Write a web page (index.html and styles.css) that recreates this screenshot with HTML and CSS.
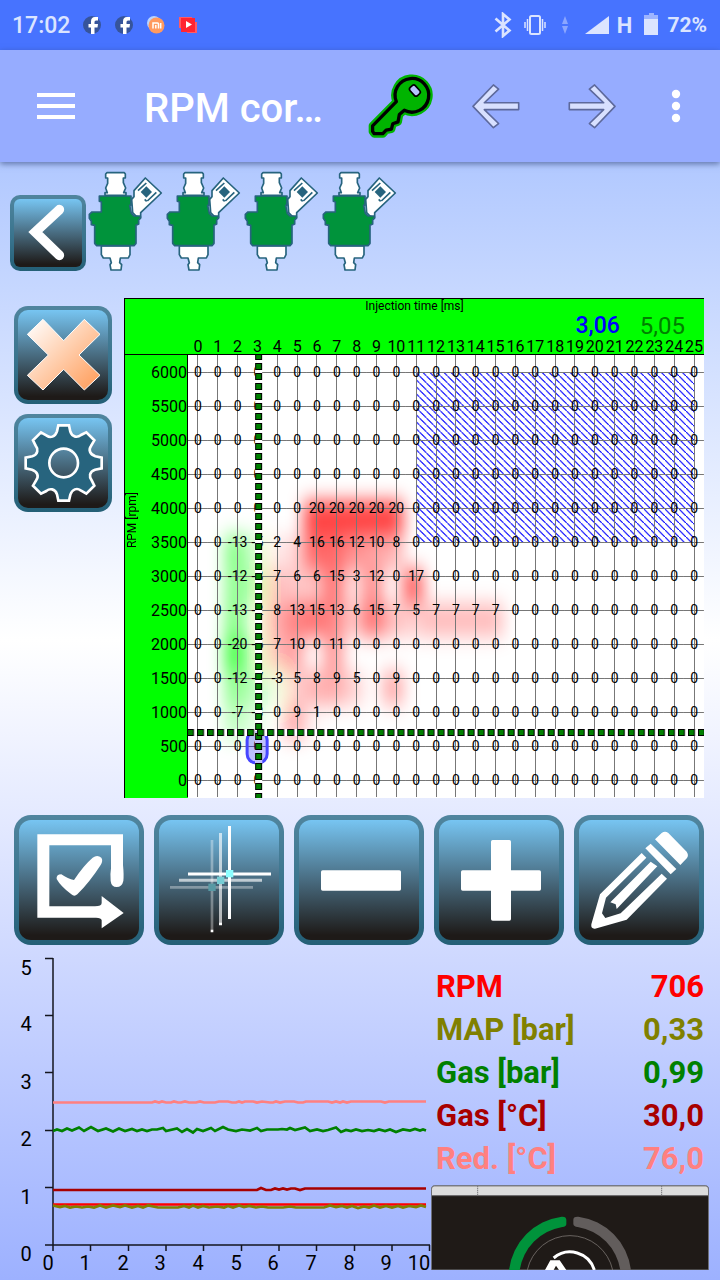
FILE: index.html
```html
<!DOCTYPE html>
<html lang="en">
<head>
<meta charset="utf-8">
<meta name="viewport" content="width=device-width, initial-scale=1">
<title>RPM correction</title>
<link rel="stylesheet" href="styles.css">
</head>
<body>
<div class="status">
  <span class="status__time">17:02</span>
  <svg class="status__app" viewBox="0 0 20 20"><circle cx="10" cy="10" r="9" fill="#36549b"/><path d="M9 19v-6.500H6.500V9H9V6.500Q9 2 13 2h3v3.500H14q-1.500 0-1.500 1.500v2h3.500l-.5 3.500h-3V19z" fill="#fff"/></svg>
  <svg class="status__app" viewBox="0 0 20 20"><circle cx="10" cy="10" r="9" fill="#36549b"/><path d="M9 19v-6.500H6.500V9H9V6.500Q9 2 13 2h3v3.500H14q-1.500 0-1.500 1.500v2h3.500l-.5 3.500h-3V19z" fill="#fff"/></svg>
  <svg class="status__app" viewBox="0 0 20 20"><circle cx="8" cy="8" r="7" fill="#b9d4ff"/><circle cx="10.500" cy="10.500" r="8" fill="#ff9a5f"/><path d="M7 13.500V8h4.500q1 0 1 1v4.500M9.800 10v3.500M14.700 8v5.500" fill="none" stroke="#fff" stroke-width="1.500"/></svg>
  <svg class="status__app" viewBox="0 0 20 20"><path d="M1 2h13v11H1z" fill="#ff5a64"/><path d="M9 7h10v11H9z" fill="#ff5a64"/><path d="M3 3h14v14H3z" fill="#ff2432"/><path d="M8 6v7l6-3.500z" fill="#fff"/></svg>
  <span class="status__space"></span>
  <svg class="status__bt" viewBox="0 0 18 26"><path d="M1.500 6.500l14 12L9 24V2l6.500 5.500-14 12" fill="none" stroke="#dbe4ff" stroke-width="2.600"/></svg>
  <svg class="status__vib" viewBox="0 0 22 20"><rect x="6" y="1" width="10" height="18" rx="1.500" fill="none" stroke="#dbe4ff" stroke-width="2"/><path d="M3.500 4v12M18.500 4v12M1 7v6M21 7v6" stroke="#dbe4ff" stroke-width="1.500"/></svg>
  <svg class="status__data" viewBox="0 0 6 18"><path d="M3 0l3 8H0zM3 18l3-8H0z" fill="#8ba6ff"/></svg>
  <svg class="status__signal" viewBox="0 0 24 18"><path d="M24 0v18H0z" fill="#dbe4ff"/></svg>
  <span class="status__net">H</span>
  <svg class="status__bat" viewBox="0 0 14 22"><path d="M5 0h5v2h4v4H0V2h5z" fill="#9db4ff"/><path d="M0 6h14v16H0z" fill="#dbe4ff"/></svg>
  <span class="status__level">72%</span>
</div>

<header class="bar">
  <button class="bar__menu" aria-label="Menu"><svg viewBox="0 0 38 26"><path d="M0 2h38M0 13h38M0 24h38" stroke="#fff" stroke-width="4"/></svg></button>
  <h1 class="bar__title">RPM cor…</h1>
  <button class="bar__key" aria-label="Key"><svg viewBox="20 218 200 200"><g stroke-linejoin="round"><path d="M109 305A51 51 0 1 1 133 331L118 344L114 366L98 372L94 388L78 391L68 402H42L37 395V378Z" fill="#00b400" stroke="#00b400" stroke-width="24"/><path d="M109 305A51 51 0 1 1 133 331L118 344L114 366L98 372L94 388L78 391L68 402H42L37 395V378Z" fill="#00b400" stroke="#000" stroke-width="10"/></g><rect x="-9" y="-17" width="22" height="33" rx="7" transform="translate(164 273) rotate(-42)" fill="#b5c5ff" stroke="#000" stroke-width="5"/></svg></button>
  <button class="bar__arrow" aria-label="Previous"><svg viewBox="336 246 148 144"><path d="M339 318L402 252L418 265L374 307H480V328H374L418 371L402 384Z" fill="#d8e0ff" stroke="#5d699c" stroke-width="5" stroke-linejoin="round"/></svg></button>
  <button class="bar__arrow" aria-label="Next"><svg viewBox="336 246 148 144"><path d="M481 318L418 252L402 265L446 307H340V328H446L402 371L418 384Z" fill="#d8e0ff" stroke="#5d699c" stroke-width="5" stroke-linejoin="round"/></svg></button>
  <button class="bar__more" aria-label="More"><svg viewBox="0 0 20 36"><circle cx="10" cy="6" r="4.200"/><circle cx="10" cy="18" r="4.200"/><circle cx="10" cy="30" r="4.200"/></svg></button>
</header>

<main>
  <svg class="defs" aria-hidden="true">
    <defs>
      <linearGradient id="peach" x1="0" y1="0" x2="1" y2="1"><stop offset=".1" stop-color="#fff6f0"/><stop offset=".9" stop-color="#ffa466"/></linearGradient>
      <g id="injector" stroke="#27647e" stroke-width="5" stroke-linejoin="round">
        <path d="M434 54L482 99L420 158V174L406 168L396 158L393 118L400 110V92Z" fill="#fff"/>
        <path d="M437 79L454 96L437 113L420 96Z" fill="#27647e" stroke="none"/>
        <path d="M412 92L437 69M440 123L467 97M432 118L438 124" fill="none"/>
        <path d="M319 38H371L374 42V54H368V68L375 84L369 98H376V106H313V98H320L315 84L321 70V54H315V42Z" fill="#fff"/>
        <path d="M302 258V284L308 294H328L332 308L328 314L331 330H361L363 314L357 308L359 294H383L388 284V258Z" fill="#fff"/>
        <path d="M296 108H391V136H387L392 160L400 168H419V175L414 180V192L406 196V250L400 257H288L282 250V196L272 194V184L266 175V163L274 156H302V126L296 124Z" fill="#00933b"/>
      </g>
    </defs>
  </svg>

  <section class="injectors">
    <button class="key key--back" aria-label="Back"><svg viewBox="42 114 204 204"><path d="M178 146L106 213L178 283" fill="none" stroke="#fff" stroke-width="29" stroke-linecap="round"/></svg></button>
    <svg class="injectors__one" viewBox="262 33 228 300"><use href="#injector"/></svg>
    <svg class="injectors__one" viewBox="262 33 228 300"><use href="#injector"/></svg>
    <svg class="injectors__one" viewBox="262 33 228 300"><use href="#injector"/></svg>
    <svg class="injectors__one" viewBox="262 33 228 300"><use href="#injector"/></svg>
  </section>

  <section class="editor">
    <div class="editor__side">
      <button class="key key--mid" aria-label="Clear"><svg viewBox="54 60 270 270"><path d="M129 88L191 152L253 88L300 133L237 195L300 256L253 300L191 238L129 300L82 256L145 195L82 133Z" fill="url(#peach)" stroke="#fff" stroke-width="3"/></svg></button>
      <button class="key key--mid" aria-label="Settings"><svg viewBox="-137 -135 270 270"><path fill-rule="evenodd" d="M-16-113L16-113L20-94C26-76 42-76 52-84L68-92L92-68L82-51C74-40 78-26 95-20L114-16V16L94 20C76 26 76 42 84 52L92 68L68 92L51 82C40 74 26 78 20 95L16 113H-16L-20 94C-26 76-42 76-52 84L-68 92L-92 68L-82 51C-74 40-78 26-95 20L-114 16V-16L-94-20C-76-26-76-42-84-52L-92-68L-68-92L-51-82C-40-74-26-78-20-95ZM-43 0A43 43 0 0 0 43 0A43 43 0 0 0-43 0Z" fill="#27647e" stroke="#fff" stroke-width="8"/></svg></button>
    </div>
    <div class="map">
      <p class="map__caption">Injection time [ms]</p>
      <p class="map__readings"><span class="map__petrol">3,06</span><span class="map__gas">5,05</span></p>
      <div class="map__body">
        <p class="map__axis"><span>RPM [rpm]</span></p>
        <div class="map__grid">
          <svg class="map__layer" viewBox="0 0 515 443" preserveAspectRatio="none">
            <defs>
              <filter id="soft" x="-20%" y="-20%" width="140%" height="140%"><feGaussianBlur stdDeviation="8 10"/></filter>
              <pattern id="hatch" width="7" height="7" patternUnits="userSpaceOnUse"><path d="M-1-1L8 8" stroke="#0000ff" stroke-width="1.100"/></pattern>
            </defs>
            <rect width="515" height="443" fill="#fff"/>
            <g id="cells" filter="url(#soft)" shape-rendering="crispEdges"></g>
            <rect x="228" y="17" width="278" height="170" fill="url(#hatch)"/>
          </svg>
          <table class="map__table" id="table"><thead><tr><td></td></tr></thead><tbody></tbody></table>
          <svg class="map__layer map__layer--over" viewBox="0 0 515 443" preserveAspectRatio="none">
            <defs>
              <pattern id="dotsV" x="67" y="-2" width="7" height="10" patternUnits="userSpaceOnUse"><rect width="7" height="7" fill="#000"/><rect x="1" y="1" width="5" height="5" fill="#008000"/></pattern>
              <pattern id="dotsH" x="9" y="374" width="10" height="7" patternUnits="userSpaceOnUse"><rect width="7" height="7" fill="#000"/><rect x="1" y="1" width="5" height="5" fill="#008000"/></pattern>
            </defs>
            <rect x="59" y="376" width="20" height="32" rx="9" fill="#0000ff" fill-opacity=".25" stroke="#4646ff" stroke-width="3"/>
            <path d="M67 0h7v443h-7z" fill="#fff"/><path d="M0 374h515v7H0z" fill="#fff"/>
            <path d="M67 376h7v32h-7z" fill="#c0c0ff"/>
            <rect x="67" y="0" width="7" height="443" fill="url(#dotsV)"/>
            <rect x="0" y="374" width="515" height="7" fill="url(#dotsH)"/>
          </svg>
        </div>
      </div>
    </div>
  </section>

  <section class="tools">
    <button class="key key--big" aria-label="Apply"><svg viewBox="57 45 360 360"><path d="M112 88H369V180Q372 210 370 228Q366 246 350 246Q334 246 332 228Q330 208 333 190V121H148V304H285Q305 304 305 294V273L371 324L305 370V346Q304 338 288 338H112Z" fill="#fff"/><path d="M170 222Q168 208 184 208Q204 222 222 225Q250 182 278 158Q292 148 304 158Q310 166 302 180Q270 230 232 268Q223 276 214 268Q182 244 170 222Z" fill="#fff"/></svg></button>
    <button class="key key--big" aria-label="Trace"><svg viewBox="477 45 360 360"><path d="M636 105V375M510 247H759" stroke="#fff" stroke-opacity=".35" stroke-width="8"/><path d="M632 374h8v8h-8zM657 353h9v8h-9z" fill="#fff"/><path d="M661.500 84V354M537 226H786" stroke="#fff" stroke-opacity=".65" stroke-width="9"/><path d="M688.500 63V342M564 207H813" stroke="#fff" stroke-width="9"/><path d="M625 236h22v22h-22z" fill="#5899a4"/><path d="M651 215h22v22h-22z" fill="#76cdd4"/><path d="M678 195h22v22h-22z" fill="#8cffff"/></svg></button>
    <button class="key key--big" aria-label="Decrease"><svg viewBox="27 45 360 360"><rect x="93" y="196" width="240" height="61" rx="5" fill="#fff"/></svg></button>
    <button class="key key--big" aria-label="Increase"><svg viewBox="447 45 360 360"><path d="M603 110q0-5 5-5h50q5 0 5 5v86h85q5 0 5 5v51q0 5-5 5h-85v85q0 5-5 5h-50q-5 0-5-5v-85h-85q-5 0-5-5v-51q0-5 5-5h85z" fill="#fff"/></svg></button>
    <button class="key key--big" aria-label="Edit"><svg viewBox="867 45 360 360"><path fill-rule="evenodd" d="M1095 103L1115 84Q1125 77 1135 84L1190 140Q1197 150 1191 159L1171 180ZM1066 130L1082 116L1159 192L1142 208ZM1055 144L1069 158L948 278L936 325L946 339L992 325L1115 206L1131 221L1010 344L915 371Q902 372 904 358L930 268ZM1082 170L1102 184L980 312L977 298L961 292Z" fill="#fff"/></svg></button>
  </section>

  <section class="live">
    <svg class="trend" viewBox="0 0 430 322" role="img" aria-label="Sensor history">
      <path d="M45 .5H53M45 57.500H53M45 114.500H53M45 172.500H53M45 229.500H53M45 287H430M53 0V293M90.500 287v6M128.500 287v6M166 287v6M203.500 287v6M241.500 287v6M279 287v6M316.500 287v6M354.500 287v6M392 287v6M429.500 287v6" fill="none" stroke="#14161f" stroke-width="1.500"/>
      <g><text x="26" y="17">5</text><text x="26" y="73">4</text><text x="26" y="131">3</text><text x="26" y="188">2</text><text x="26" y="246">1</text><text x="26" y="303">0</text></g>
      <g><text x="48" y="312">0</text><text x="85" y="312">1</text><text x="123" y="312">2</text><text x="160" y="312">3</text><text x="198" y="312">4</text><text x="236" y="312">5</text><text x="273" y="312">6</text><text x="311" y="312">7</text><text x="349" y="312">8</text><text x="386" y="312">9</text><text x="419" y="312">10</text></g>
      <g fill="none" stroke-width="2.700">
        <path d="M53 144.500H152L155 143.500L159 144.500L162 143.500L166 144.500H171L174 143.500L178 144.500H181L185 143.500L189 144.500H196L200 143.500L204 144.500H215L219 143.500H228L232 144.500H236L239 143.500L242 144.500L245 143.500H253L257 144.500L262 143.500L270 144.500H273L276 143.500L280 144.500L285 143.500H294L298 144.500H303L306 143.500H328L332 144.500L336 143.500L340 144.500L343 143.500L347 144.500L351 143.500H381L385 144.500L389 143.500H426" stroke="#ff8080"/>
        <path d="M53 173L57 171.500L62 173L67 170.500L72 172.500L79 169.500L84 173L91 169L98 173L106 170.500L113 173.500L119 170.500L125 173L132 171L137 173L142 171.500L147 173L152 171.500H157L163 170L166 173L177 170.500L182 174L187 171L193 174.500L197 171L203 173L211 170L215 173L223 169L228 171.500L236 173L242 171.500L250 172.500L257 170L261 173L267 171.500H278L282 171L287 171.500L290 170L295 172L305 169.500L310 173L317 171.500L323 173L328 172L336 169.500L341 174L346 172L351 173L356 171.500L362 173L368 172L374 173L379 171.500L385 173L390 171.500L396 174L403 171.500L410 172.500L415 171L420 172.500L423 171.500L426 172.500" stroke="#008000"/>
        <path d="M53 232H257L261 230L266 232H271L275 230.500L279 231.500L283 230.500L287 231.500L291 230.500H295L300 232L305 230.500H426" stroke="#a80000"/>
        <path d="M53 246.500H426" stroke="#ff0000"/>
        <path d="M53 247.500L60 249L65 248L70 249.500L76 248.500L82 249.500L88 248.500L94 249.500L100 247.500L106 249.500L113 247.500L120 249L125 247.500L132 249.500L138 248L143 249.500L148 247.500L158 249.500H178L184 248L189 249.500L193 247.500L198 249.500L203 248L209 249.500L217 248.500L224 249.500L228 248L233 249.500L239 247.500L244 249L249 248L256 249.500L262 248.500L268 249.500H283L290 248.500L296 249.500H324L330 247.500L336 249L342 248L347 249.500L352 248L358 250L364 248.500L369 249.500L374 247.500L380 249.500L386 248L392 249.500L398 248L403 249.500L409 248L416 249L421 247.500L426 249" stroke="#808000"/>
      </g>
    </svg>
    <div class="live__side">
      <dl class="values">
        <div class="values__row values__row--rpm"><dt>RPM</dt><dd>706</dd></div>
        <div class="values__row values__row--map"><dt>MAP [bar]</dt><dd>0,33</dd></div>
        <div class="values__row values__row--press"><dt>Gas [bar]</dt><dd>0,99</dd></div>
        <div class="values__row values__row--gas"><dt>Gas [°C]</dt><dd>30,0</dd></div>
        <div class="values__row values__row--red"><dt>Red. [°C]</dt><dd>76,0</dd></div>
      </dl>
      <svg class="switch" viewBox="18 675 834 255" role="img" aria-label="Fuel switch">
        <path d="M19 690Q19 677 28 677H842Q851 677 851 690V930H19Z" fill="#1f1a17" stroke="#74767c" stroke-width="3"/>
        <path d="M21 706V688Q21 679 28 679H842Q849 679 849 688V706Z" fill="#dcdcdc"/>
        <path d="M158 678V706M710 678V706" stroke="#77777b" stroke-width="3" stroke-dasharray="4 2"/>
        <path d="M20 707H850" stroke="#8a8a8c" stroke-width="2"/>
        <path d="M252 930A184 184 0 0 1 410 770Q424 769 424 780V792Q424 800 412 801A154 154 0 0 0 284 930Z" fill="#00933b"/>
        <path d="M618 930A184 184 0 0 0 460 770Q444 769 445 780V792Q446 800 458 801A154 154 0 0 1 586 930Z" fill="#625d5c"/>
        <path d="M307 930A131 131 0 0 1 563 930" fill="none" stroke="#77716e" stroke-width="2.500"/>
        <path d="M386 894A76 76 0 0 1 508 930" fill="none" stroke="#fff" stroke-width="9"/>
        <path d="M360 930L376 901H404L424 930H402L393 917L386 930Z" fill="#fff"/>
      </svg>
    </div>
  </section>
</main>
<script src="map.js"></script>
</body>
</html>
```

FILE: styles.css
```css
* { box-sizing: border-box; }
html { min-height: 100%; }
body {
  margin: 0;
  min-height: 100vh;
  font-family: Roboto, "Noto Sans", sans-serif;
  color: #000;
  background: linear-gradient(#97b6ff, #fff 50%, #9db1ff);
}
p, h1, dl, dd { margin: 0; }
button { padding: 0; border: 0; background: none; font: inherit; cursor: pointer; }
svg { display: block; }
.defs { position: absolute; width: 0; height: 0; }

.status {
  display: flex;
  align-items: center;
  height: 50px;
  padding: 0 13px 0 12px;
  background: #4773ff;
  color: #dbe4ff;
  font-size: 23px;
  font-weight: 700;
}
.status__time { margin-right: 12px; font-weight: 500; }
.status__app { width: 20px; height: 20px; margin-right: 12px; }
.status__space { flex: 1; }
.status__bt { width: 18px; height: 26px; margin-right: 12px; }
.status__vib { width: 22px; height: 20px; margin-right: 16px; }
.status__data { width: 6px; height: 18px; margin-right: 17px; }
.status__signal { width: 24px; height: 18px; margin-right: 8px; }
.status__net { margin-right: 12px; font-size: 22px; }
.status__bat { width: 14px; height: 22px; margin: 0 9px 2px 0; }
.status__level { font-size: 21px; }

.bar {
  display: flex;
  align-items: center;
  height: 112px;
  padding: 0 34px 0 37px;
  background: #96acff;
  box-shadow: 0 2px 6px rgba(40, 60, 110, .6);
}
.bar__menu { width: 38px; margin: 0 69px 0 0; }
.bar__title { flex: 1; min-width: 0; padding-top: 4px; color: #fff; font-size: 40px; font-weight: 500; white-space: nowrap; }
.bar__key { width: 66px; margin-right: 39px; }
.bar__arrow { width: 48px; margin-right: 48px; }
.bar__arrow + .bar__arrow { margin-right: 50px; }
.bar__more { width: 20px; fill: #fff; }

.key {
  flex: none;
  border: 4px solid transparent;
  border-radius: 14px;
  background:
    linear-gradient(#77c5f2, #1e1a18 96%) padding-box,
    linear-gradient(#50859e, #37728c 60%, #245f76) border-box;
}
.key svg { width: 100%; height: 100%; }
.key--back { width: 76px; height: 76px; border-radius: 10px; margin-right: 2px; }
.key--mid { width: 98px; height: 98px; }
.key--big { flex: 1; aspect-ratio: 1; border-width: 5px; border-radius: 17px; }

.injectors { display: flex; align-items: flex-end; gap: 2px; padding: 9px 10px 0; }
.injectors__one { width: 76px; height: 100px; margin-left: -2px; margin-right: 2px; }

.editor { display: flex; gap: 12px; padding: 27px 16px 0 14px; }
.editor__side { display: flex; flex-direction: column; gap: 10px; padding-top: 8px; }

.map { flex: 1; min-width: 0; background: #0f0; border: 1px solid #000; border-width: 1px 0 0 1px; }
.map__caption { height: 14px; line-height: 14px; font-size: 12px; text-align: center; }
.map__readings { display: flex; justify-content: flex-end; gap: 20px; height: 25px; padding-right: 19px; line-height: 26px; font-size: 24px; }
.map__petrol { color: #00f; font-size: 23px; font-weight: 500; }
.map__gas { color: #008000; }
.map__body { display: flex; }
.map__axis { display: flex; align-items: center; justify-content: center; width: 15px; margin-top: 16px; padding-bottom: 112px; border-top: 1px solid #000; line-height: 15px; font-size: 12px; }
.map__axis span { writing-mode: vertical-rl; transform: rotate(180deg); }
.map__grid { position: relative; flex: 1; min-width: 0; }
.map__layer { position: absolute; left: 48px; top: 17px; width: calc(100% - 48px); height: calc(100% - 17px); }
.map__layer--over { pointer-events: none; }
.map__table, .map__table thead, .map__table tbody { display: block; position: relative; }
.map__table tr { display: grid; grid-template-columns: 48px repeat(26, 1fr); }
.map__table th, .map__table td { display: flex; align-items: center; justify-content: center; min-width: 0; padding: 0; font-size: 16px; font-weight: 400; white-space: nowrap; }
.map__table thead tr { height: 17px; border-bottom: 1px solid #000; line-height: 18px; }
.map__table tbody { padding-bottom: 1px; }
.map__table tbody tr { height: 34px; }
.map__table tbody th { justify-content: flex-end; background: #0f0; border-right: 1px solid #000; }
.map__table tbody td {
  font-size: 14px;
  background:
    linear-gradient(#777, #777) center / 1px 100% no-repeat,
    linear-gradient(#777, #777) center / 100% 1px no-repeat;
}

.tools { display: flex; gap: 10px; padding: 17px 16px 0 14px; }

.live { display: grid; grid-template-columns: minmax(0, 43fr) minmax(0, 29fr); padding-top: 13px; }
.trend { width: 100%; overflow: visible; font-size: 20px; text-anchor: middle; }
.live__side { padding: 7px 11px 0 1px; }
.values { padding: 0 5px; font-size: 31px; font-weight: 700; }
.values__row { display: flex; justify-content: space-between; line-height: 43px; }
.values__row--rpm { color: #f00; }
.values__row--map { color: #808000; }
.values__row--press { color: #008000; }
.values__row--gas { color: #a80000; }
.values__row--red { color: #ff8080; }
.switch { width: 100%; margin-top: 5px; }
```

FILE: map.js
```js
const COLUMNS = 26;
const ROWS = [
  [6000], [5500], [5000], [4500],
  [4000, 0, 0, 0, 0, 0, 0, 20, 20, 20, 20, 20],
  [3500, 0, 0, -13, -5, 2, 4, 16, 16, 12, 10, 8],
  [3000, 0, 0, -12, -8, 7, 6, 6, 15, 3, 12, 0, 17],
  [2500, 0, 0, -13, -2, 8, 13, 15, 13, 6, 15, 7, 5, 7, 7, 7, 7],
  [2000, 0, 0, -20, -5, 7, 10, 0, 11],
  [1500, 0, 0, -12, -7, -3, 5, 8, 9, 5, 0, 9],
  [1000, 0, 0, -7, -3, 0, 9, 1],
  [500], [0]
];

const head = document.querySelector("#table thead tr");
for (let c = 0; c < COLUMNS; c++) {
  const th = document.createElement("th");
  th.scope = "col";
  th.textContent = c;
  head.append(th);
}

const body = document.querySelector("#table tbody");
const cells = document.getElementById("cells");
const cw = 515 / COLUMNS;
const ch = 34;

ROWS.forEach(([rpm, ...values], r) => {
  const tr = document.createElement("tr");
  const th = document.createElement("th");
  th.scope = "row";
  th.textContent = rpm;
  tr.append(th);
  for (let c = 0; c < COLUMNS; c++) {
    const value = values[c] || 0;
    const td = document.createElement("td");
    td.textContent = value;
    tr.append(td);
    if (value) {
      const rect = document.createElementNS("http://www.w3.org/2000/svg", "rect");
      rect.setAttribute("x", Math.round(c * cw) - 3);
      rect.setAttribute("y", r * ch + 10);
      rect.setAttribute("width", Math.round((c + 1) * cw) - Math.round(c * cw));
      rect.setAttribute("height", ch);
      rect.setAttribute("fill", value > 0 ? "#ff0000" : "#00ff00");
      rect.setAttribute("fill-opacity", Math.abs(value) / 27);
      cells.append(rect);
    }
  }
  body.append(tr);
});
```
